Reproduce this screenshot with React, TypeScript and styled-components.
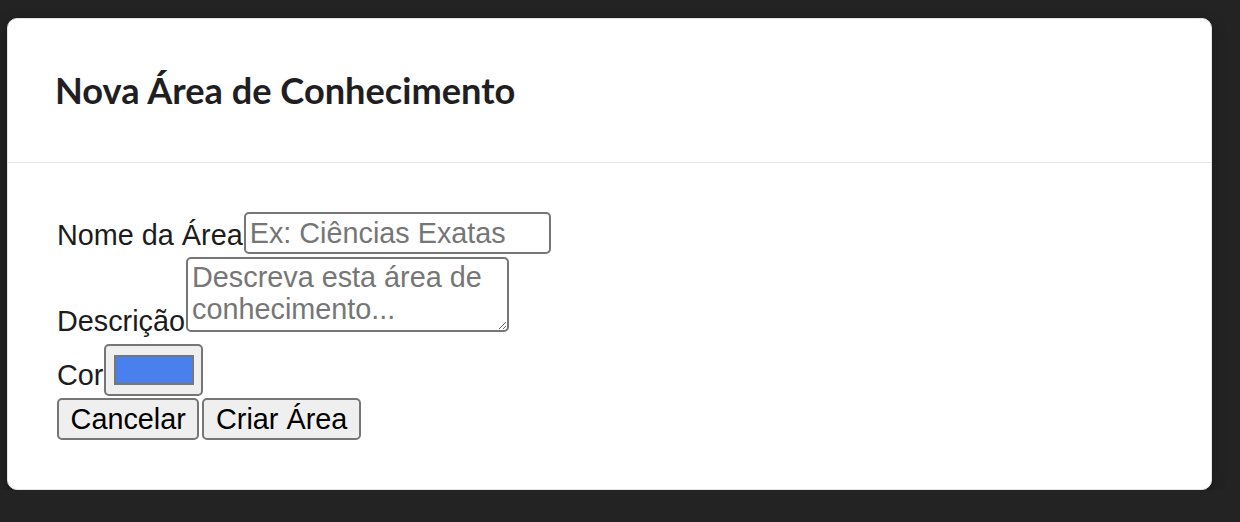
import styled, { createGlobalStyle } from 'styled-components';

const GlobalStyle = createGlobalStyle`
  html,
  body {
    margin: 0;
    background: #232323;
  }

  body {
    font-family: 'Liberation Sans', Arial, sans-serif;
  }
`;

const Modal = styled.div`
  box-sizing: border-box;
  width: 1205px;
  margin: 18px 0 0 7px;
  background: #ffffff;
  border: 1px solid #e4e4e8;
  border-radius: 10px;
  box-shadow: 0 4px 14px rgba(0, 0, 0, 0.35);
`;

const ModalHeader = styled.header`
  padding: 49px 47px;
  border-bottom: 1px solid #e4e4e8;
`;

const Title = styled.h2`
  margin: 0;
  font-family: Lato, 'Noto Sans', sans-serif;
  font-weight: 700;
  font-size: 36.2px;
  line-height: 45px;
  color: #1f1f23;
`;

const Form = styled.form`
  display: flex;
  flex-direction: column;
  align-items: flex-start;
  padding: 49px 49px;
`;

const Row = styled.div<{ $mt?: number }>`
  display: flex;
  align-items: flex-end;
  margin-top: ${({ $mt }) => $mt ?? 0}px;
`;

const Label = styled.label<{ $drop: number }>`
  font-size: 28.8px;
  line-height: 33px;
  color: #1c1c1c;
  margin-bottom: ${({ $drop }) => $drop}px;
  padding-right: 1px;
`;

const controlBase = `
  box-sizing: border-box;
  margin: 0;
  font-family: 'Liberation Sans', Arial, sans-serif;
  font-size: 28.8px;
  color: #000000;
  border: 2px solid #767676;
  border-radius: 5px;
  outline: none;

  &::placeholder {
    color: #767676;
    opacity: 1;
  }
`;

const TextInput = styled.input`
  ${controlBase}
  width: 307px;
  height: 42px;
  padding: 0 4px;
  line-height: 33px;
  background: #ffffff;
`;

const TextArea = styled.textarea`
  ${controlBase}
  width: 323px;
  height: 75px;
  padding: 2px 4px;
  line-height: 32px;
  background: #ffffff;
  resize: both;
`;

const ColorInput = styled.input`
  box-sizing: border-box;
  width: 99px;
  height: 52px;
  margin: 0;
  padding: 0;
  background: #efefef;
  border: 2px solid #767676;
  border-radius: 5px;
  cursor: pointer;

  &::-webkit-color-swatch-wrapper {
    padding: 9px 7.5px;
  }

  &::-webkit-color-swatch {
    border: 2px solid #777777;
    border-radius: 0;
  }
`;

const Actions = styled.div`
  display: flex;
  gap: 3px;
  margin-top: 2px;
`;

const Button = styled.button`
  box-sizing: border-box;
  height: 42px;
  margin: 0;
  padding: 2px 11.6px;
  font-family: 'Liberation Sans', Arial, sans-serif;
  font-size: 28.8px;
  line-height: 33px;
  color: #000000;
  background: #efefef;
  border: 2px solid #767676;
  border-radius: 5px;
`;

export default function App() {
  return (
    <>
      <GlobalStyle />
      <Modal role="dialog">
        <ModalHeader>
          <Title>Nova Área de Conhecimento</Title>
        </ModalHeader>

        <Form onSubmit={(e) => e.preventDefault()}>
          <Row>
            <Label htmlFor="area-name" $drop={2.5}>
              Nome da Área
            </Label>
            <TextInput id="area-name" placeholder="Ex: Ciências Exatas" />
          </Row>

          <Row $mt={3}>
            <Label htmlFor="area-desc" $drop={-6}>
              Descrição
            </Label>
            <TextArea id="area-desc" placeholder="Descreva esta área de conhecimento..." />
          </Row>

          <Row $mt={12}>
            <Label htmlFor="area-color" $drop={4.5}>
              Cor
            </Label>
            <ColorInput id="area-color" type="color" defaultValue="#4a7fee" />
          </Row>

          <Actions>
            <Button type="button">Cancelar</Button>
            <Button type="submit">Criar Área</Button>
          </Actions>
        </Form>
      </Modal>
    </>
  );
}
